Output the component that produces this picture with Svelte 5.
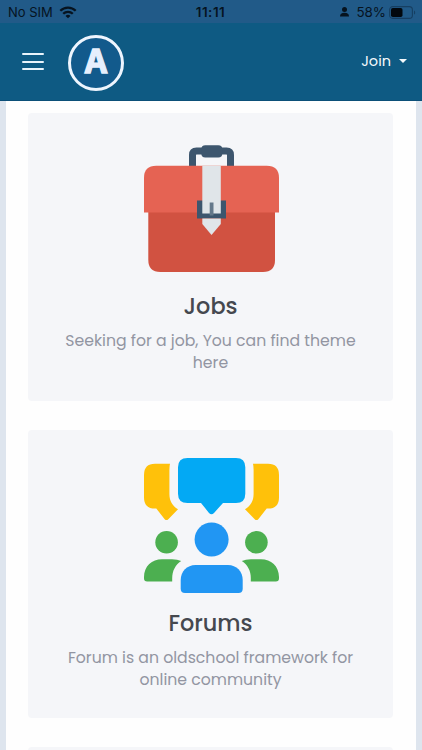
<script>
	const cards = [
		{
			icon: 'jobs',
			title: 'Jobs',
			lines: ['Seeking for a job, You can find theme', 'here']
		},
		{
			icon: 'forums',
			title: 'Forums',
			lines: ['Forum is an oldschool framework for', 'online community']
		}
	];
</script>

<div class="screen">
	<div class="status">
		<div class="carrier">
			<span>No SIM</span>
			<svg width="18" height="13" viewBox="0 0 18 13" fill="none" stroke="#06131f" stroke-width="2.3">
				<path d="M1.3 4.8C5.6.5 12.4.5 16.7 4.8" />
				<path d="M4.2 7.8C6.9 5.1 11.1 5.1 13.8 7.8" />
				<path d="M6.5 9.9C7.9 8.5 10.1 8.5 11.5 9.9L9 12.3Z" fill="#06131f" stroke="none" />
			</svg>
		</div>
		<span class="time">11:11</span>
		<div class="battery">
			<svg width="9" height="10" viewBox="0 0 9 10" fill="#06131f">
				<circle cx="4.5" cy="2.6" r="2.5" />
				<path d="M0 9.6C0 7 1.5 5.8 4.5 5.8S9 7 9 9.6Z" />
			</svg>
			<span class="percent">58%</span>
			<svg width="27" height="13" viewBox="0 0 27 13">
				<rect x=".6" y=".6" width="22.8" height="11.8" rx="3.2" fill="none" stroke="#163f62" stroke-width="1.1" />
				<rect x="2" y="2" width="11.5" height="9" rx="1.8" fill="#02080e" />
				<path d="M25 4.4C26.6 5 26.6 8 25 8.6Z" fill="#163f62" />
			</svg>
		</div>
	</div>

	<header>
		<button class="menu" aria-label="Menu">
			<span></span>
			<span></span>
			<span></span>
		</button>
		<div class="logo">A</div>
		<button class="join">Join <i></i></button>
	</header>

	<main>
		{#each cards as card}
			<section class="card">
				{#if card.icon === 'jobs'}
					<svg width="135" height="135" viewBox="0 0 135 135">
						<path d="M48.5 26V14Q48.5 10 52.5 10H82.5Q86.5 10 86.5 14V26" fill="none" stroke="#3d566e" stroke-width="7" />
						<rect x="57.3" y="4.3" width="21" height="12.2" rx="4" fill="#3d566e" />
						<path d="M4.3 68H131V119Q131 131 119 131H16.3Q4.3 131 4.3 119Z" fill="#d15241" />
						<path d="M0 71.5V37Q0 24.8 12.3 24.8H122.7Q135 24.8 135 37V71.5Z" fill="#e56353" />
						<rect x="53" y="59.5" width="29" height="18" fill="#3d566e" />
						<path d="M58.3 24.8H76.8V72.5H58.3Z" fill="#e0e5e9" />
						<path d="M58.3 77.5H76.8V83L67.5 94L58.3 83Z" fill="#e0e5e9" />
						<path d="M65.7 61.5H69.5V74.5H65.7Z" fill="#64788a" />
					</svg>
				{:else}
					<svg width="135" height="135" viewBox="0 0 135 135">
						{#each ['', 'translate(135 0) scale(-1 1)'] as side}
							<g transform={side}>
								<path
									d="M11 5.7H26Q25.4 8 25.4 12V36C25.4 43 28.5 48 34 51.2L24.3 61.2Q22.5 63 20.7 61.2L12.3 50.6H11Q0 50.6 0 39.5V17Q0 5.7 11 5.7Z"
									fill="#ffc10a"
								/>
								<circle cx="22.6" cy="84.2" r="11.3" fill="#4caf50" />
								<path
									d="M3.2 123.5Q0 123.5 0 120.2V119C0 108 8 101.2 18 101.2H28Q33.5 101.2 37.2 103C31.2 107 28.2 113 28.2 120V123.5Z"
									fill="#4caf50"
								/>
							</g>
						{/each}
						<path
							d="M43.5 0H92Q101.3 0 101.3 9.3V35.7Q101.3 45 92 45H79L70 54.9Q67.5 57.4 65 54.9L57 45H43.5Q34 45 34 35.7V9.3Q34 0 43.5 0Z"
							fill="#03a9f4"
						/>
						<circle cx="67.6" cy="81.5" r="17" fill="#2196f3" />
						<path
							d="M51.5 107H84C92.5 107 98.7 113.5 98.7 122V130.8Q98.7 135 94.5 135H41Q36.7 135 36.7 130.8V122C36.7 113.5 43 107 51.5 107Z"
							fill="#2196f3"
						/>
					</svg>
				{/if}
				<h2>{card.title}</h2>
				<p>
					{#each card.lines as line}
						<span>{line}</span>
					{/each}
				</p>
			</section>
		{/each}
		<section class="card"></section>
	</main>
</div>

<style>
	:global(body) {
		margin: 0;
		background: #dee5ee;
	}

	.screen {
		height: 750px;
		overflow: hidden;
		display: flex;
		flex-direction: column;
		font-family: Poppins, Inter, 'Open Sans', sans-serif;
	}

	.status {
		flex: none;
		height: 23px;
		display: grid;
		grid-template-columns: 1fr auto 1fr;
		align-items: center;
		box-sizing: border-box;
		padding: 1px 6px 0 8px;
		background: #215a88;
		color: #06131f;
		font: 13.4px Inter, sans-serif;
	}

	.carrier,
	.battery {
		display: flex;
		align-items: center;
	}

	.carrier {
		gap: 6px;
		font-size: 13px;
	}

	.battery {
		justify-content: flex-end;
	}

	.percent {
		margin: 0 3px 0 7px;
	}

	.time {
		font-weight: 600;
		letter-spacing: 0.5px;
		margin-right: 3px;
	}

	header {
		flex: none;
		height: 78px;
		box-sizing: border-box;
		display: flex;
		align-items: center;
		padding: 0 15px 0 22px;
		background: #0e5a83;
		border-bottom: 1px solid #0b4f78;
	}

	button {
		border: 0;
		padding: 0;
		background: none;
		font-family: inherit;
	}

	.menu {
		width: 22px;
		display: flex;
		flex-direction: column;
		gap: 5.4px;
	}

	.menu span {
		height: 2px;
		border-radius: 1px;
		background: #e9f4fb;
	}

	.logo {
		width: 56px;
		height: 56px;
		box-sizing: border-box;
		margin: 3px 0 0 24px;
		border: 3px solid #eef5fe;
		border-radius: 50%;
		background: #125a8c;
		color: #e6effd;
		font-family: Inter, sans-serif;
		font-size: 32px;
		font-weight: 700;
		line-height: 47px;
		text-align: center;
		-webkit-text-stroke: 1.3px #e6effd;
	}

	.join {
		margin-left: auto;
		display: flex;
		align-items: center;
		gap: 8px;
		color: #f4f9fc;
		font-size: 14.5px;
	}

	.join i {
		border: 4px solid transparent;
		border-top: 4.5px solid #f4f9fc;
		border-bottom: 0;
		margin-bottom: 2px;
	}

	main {
		flex: 1;
		margin: 0 6px;
		padding: 12px 23px 0 22px;
		background: #fefefe;
	}

	.card {
		height: 288px;
		box-sizing: border-box;
		margin-bottom: 29px;
		padding-top: 27.5px;
		border-radius: 4px;
		background: #f5f6f9;
		text-align: center;
	}

	.card svg {
		display: block;
		margin: 0 auto;
		transform: translateX(1px);
	}

	h2 {
		margin: 13px 0 0;
		color: #45484f;
		font-size: 22.4px;
		line-height: 34px;
		font-weight: 500;
	}

	p {
		margin: 7px 0 0;
		color: #9295a2;
		font-size: 15.7px;
		line-height: 22.5px;
	}

	p span {
		display: block;
		white-space: nowrap;
	}
</style>
